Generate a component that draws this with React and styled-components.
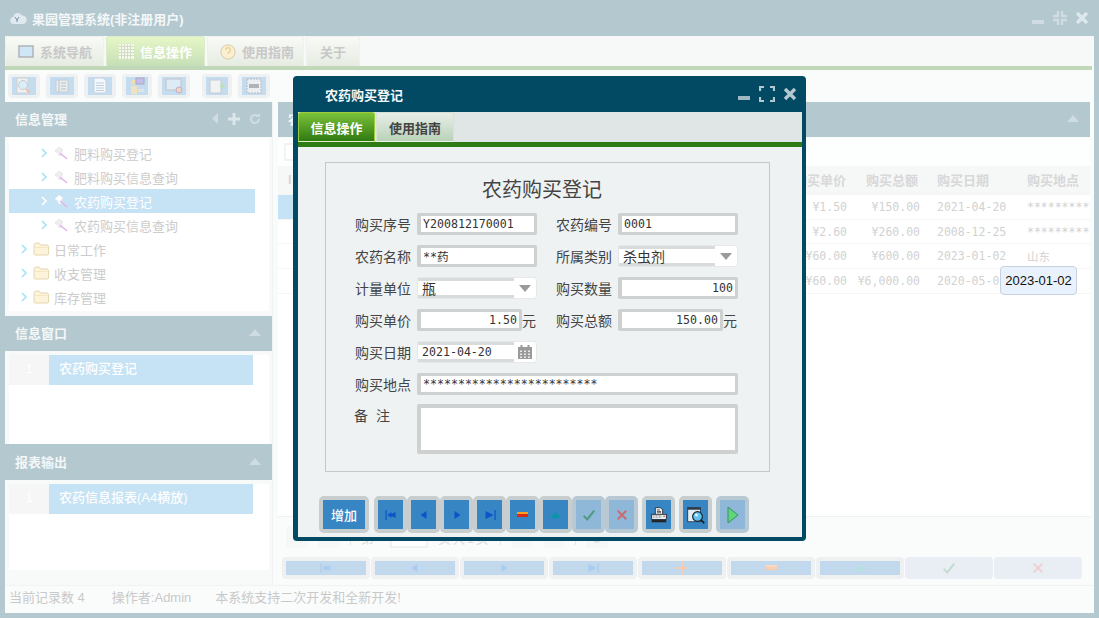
import styled, { createGlobalStyle } from 'styled-components';

const CJK = '"Liberation Sans", "Noto Sans CJK SC", sans-serif';
const MONO = '"DejaVu Sans Mono", "Noto Sans CJK SC", monospace';

const GlobalStyle = createGlobalStyle`
  html, body {
    margin: 0;
    padding: 0;
    background: #b4c8cf;
    overflow: hidden;
  }
  * { box-sizing: border-box; }
`;

/* ---------- icons ---------- */

const MinIcon = ({ color }) => (
  <svg width="14" height="14" viewBox="0 0 14 14"><rect x="1" y="9" width="12" height="4" fill={color} /></svg>
);

const RestoreIcon = ({ color }) => (
  <svg width="16" height="16" viewBox="0 0 16 16" fill="none" stroke={color} strokeWidth="2.4">
    <path d="M6 1v5H1M10 1v5h5M6 15v-5H1M10 15v-5h5" />
  </svg>
);

const MaxIcon = ({ color }) => (
  <svg width="16" height="16" viewBox="0 0 16 16" fill="none" stroke={color} strokeWidth="2.2">
    <path d="M1 5V1h4M11 1h4v4M1 11v4h4M15 11v4h-4" />
  </svg>
);

const CloseIcon = ({ color }) => (
  <svg width="14" height="14" viewBox="0 0 14 14" fill="none" stroke={color} strokeWidth="3.4">
    <path d="M2 2l10 10M12 2L2 12" />
  </svg>
);

const Caret = ({ color = '#cfdde2', down }) => (
  <svg width="12" height="7" viewBox="0 0 12 7">
    <path d={down ? 'M6 7l6-7H0z' : 'M6 0l6 7H0z'} fill={color} />
  </svg>
);

const Chevron = ({ color = '#a8e2f8' }) => (
  <svg width="8" height="10" viewBox="0 0 8 10" fill="none" stroke={color} strokeWidth="1.6">
    <path d="M2 1l4 4-4 4" />
  </svg>
);

const Folder = () => (
  <svg width="16" height="14" viewBox="0 0 16 14">
    <path d="M1 3.5C1 2 2 1 3 1h3l1.5 2H14c.8 0 1.5.6 1.5 1.5V12c0 .8-.6 1-1.5 1H2.5C1.5 13 1 12.5 1 12z" fill="#fdf3d8" stroke="#e6d6ae" />
    <rect x="2" y="5" width="12.5" height="1" fill="#f4e6c2" />
  </svg>
);

const Wand = ({ active }) => (
  <svg width="14" height="14" viewBox="0 0 14 14">
    <path d="M1 5l4-4 4 3-2 2 1 3-3 1-1-3z" fill={active ? '#fff' : '#eeeeee'} stroke={active ? '#eaf2f8' : '#dcdcdc'} strokeDasharray={active ? '' : '1 1'} />
    <path d="M6 7l7 6" stroke="#e3b4ee" strokeWidth="1.6" />
  </svg>
);

const PagerGlyph = ({ kind, color }) => {
  const shapes = {
    first: <><rect x="1.5" y="2" width="1.2" height="10" fill={color} /><path d="M3.5 7l4-3v2l4-2v6l-4-2v2z" fill={color} /></>,
    prev: <path d="M3.5 7l6-4v8z" fill={color} />,
    next: <path d="M10.5 7l-6-4v8z" fill={color} />,
    last: <><rect x="11.5" y="2" width="1.2" height="10" fill={color} /><path d="M10.5 7l-8-4v8z" fill={color} /></>,
  };
  return <svg width="14" height="14" viewBox="0 0 14 14">{shapes[kind]}</svg>;
};

const MinusGlyph = ({ pale }) => (
  <svg width="11" height="6" viewBox="0 0 11 6">
    <rect width="11" height="2" fill={pale ? '#f9d8c0' : '#f5a01e'} />
    <rect y="2" width="11" height="3" fill={pale ? '#f8cdb4' : '#d82a10'} />
  </svg>
);

const PlusGlyph = () => (
  <svg width="12" height="14" viewBox="0 0 12 14">
    <path d="M5 0h2v6h5v2H7v6H5V8H0V6h5z" fill="#f8cdb4" />
  </svg>
);

const UpGlyph = ({ pale }) => (
  <svg width="11" height="6" viewBox="0 0 11 6"><path d="M5.5 0L11 6H0z" fill={pale ? '#b6e2de' : '#0b95a8'} /></svg>
);

const CheckGlyph = ({ color }) => (
  <svg width="14" height="14" viewBox="0 0 16 14" fill="none" stroke={color} strokeWidth="2.4"><path d="M2 8l4 4 8-10" /></svg>
);

const CrossGlyph = ({ color }) => (
  <svg width="12" height="12" viewBox="0 0 14 14" fill="none" stroke={color} strokeWidth="2.2"><path d="M2 2l10 10M12 2L2 12" /></svg>
);

const PrinterGlyph = () => (
  <svg width="16" height="16" viewBox="0 0 22 22">
    <path d="M6 1h7l3 3v7H6z" fill="#fff" stroke="#111" />
    <path d="M8 4h4M8 6h6M8 8h6" stroke="#111" />
    <rect x="1" y="10" width="20" height="7" fill="#e8edf0" stroke="#111" />
    <path d="M3 12h12M3 14h12" stroke="#555" strokeDasharray="1 1" />
    <rect x="17" y="12" width="2" height="1.5" fill="#e02020" />
    <rect x="1" y="18" width="20" height="3" fill="#222" />
  </svg>
);

const PreviewGlyph = () => (
  <svg width="18" height="18" viewBox="0 0 24 24">
    <rect x="1" y="2" width="17" height="19" fill="#e6edf2" stroke="#1a2530" />
    <rect x="1" y="2" width="17" height="3" fill="#2d3d4d" />
    <circle cx="14" cy="14" r="6.5" fill="#62c0f0" stroke="#15222e" strokeWidth="1.5" />
    <circle cx="12.5" cy="12" r="2" fill="#e6f6ff" />
    <path d="M19 19l4 4" stroke="#111" strokeWidth="2.2" />
  </svg>
);

const PlayGlyph = () => (
  <svg width="14" height="18" viewBox="0 0 14 18"><path d="M2 1l10 8-10 8z" fill="#5fd478" stroke="#3c8d6a" /></svg>
);

const CalendarGlyph = () => (
  <svg width="16" height="16" viewBox="0 0 16 16">
    <path d="M1 3h14v12H1z" fill="#9a9a9a" />
    <rect x="3.5" y="1" width="2" height="3" fill="#9a9a9a" />
    <rect x="10.5" y="1" width="2" height="3" fill="#9a9a9a" />
    {[3, 7, 11].map((x) => [7, 10, 13].map((y) => (
      <rect key={`${x}-${y}`} x={x} y={y - 0.5} width="2" height="1.5" fill="#e8e8e8" />
    )))}
  </svg>
);

const RefreshGlyph = () => (
  <svg width="14" height="14" viewBox="0 0 12 12" fill="none" stroke="#e2e4e4" strokeWidth="2">
    <path d="M10 6a4 4 0 1 1-1.5-3.1" />
    <path d="M11 0v4H7z" fill="#e2e4e4" stroke="none" />
  </svg>
);

const CloudLogo = () => (
  <svg width="17" height="14" viewBox="0 0 17 14">
    <path d="M4 13a3.5 3.5 0 0 1-.5-7A4.5 4.5 0 0 1 12 4.5 4 4 0 0 1 13 13z" fill="#dfeaf0" />
    <path d="M5 6l2 3 2-3M7 9v2" stroke="#6f8fa0" fill="none" />
  </svg>
);

const MonitorIcon = () => (
  <svg width="16" height="14" viewBox="0 0 16 14">
    <rect x="1" y="1" width="14" height="11" fill="#cfe6f6" stroke="#b0b4b8" strokeWidth="1.5" />
  </svg>
);

const GridIcon = () => (
  <svg width="15" height="15" viewBox="0 0 15 15">
    <rect width="15" height="15" fill="#f4f8ea" />
    <path d="M0 2.5h15M0 5.5h15M0 8.5h15M0 11.5h15M2.5 0v15M5.5 0v15M8.5 0v15M11.5 0v15" stroke="#d3dcc4" />
  </svg>
);

const HelpIcon = () => (
  <svg width="16" height="16" viewBox="0 0 17 17">
    <circle cx="8.5" cy="8.5" r="7.5" fill="#fbefd2" stroke="#d8c8a0" />
    <path d="M6 6.5a2.5 2.5 0 1 1 3.5 2.3c-.7.3-1 .7-1 1.7" stroke="#e8d49a" fill="none" strokeWidth="1.5" />
  </svg>
);

const toolIcons = [
  <><rect x="2" y="1" width="11" height="15" fill="#f0f2f2" stroke="#d0d0d0" /><circle cx="8" cy="8" r="4.5" fill="#d9eef8" stroke="#c8ccd0" /><path d="M11 12l4 4" stroke="#ecc0b0" strokeWidth="2" /></>,
  <><rect x="3" y="3" width="12" height="12" fill="#e8edf0" stroke="#c8ccd0" /><path d="M6 3v12M8 6h5M8 9h5M8 12h5" stroke="#bbbfc2" /></>,
  <><path d="M3 1h9l3 3v12H3z" fill="#f4f8fb" stroke="#c8d0d8" /><path d="M5 6h8M5 8.5h8M5 11h8M5 13.5h8" stroke="#bcd0e0" /></>,
  <><circle cx="6" cy="5" r="2.5" fill="#f4dcae" /><path d="M3 9h6v8H3z" fill="#efe2c0" /><rect x="8" y="1" width="8" height="6" fill="#c4bfe8" stroke="#a8a8c0" /><rect x="10" y="12" width="6" height="3" fill="#e0e4e4" /></>,
  <><rect x="1" y="2" width="15" height="11" fill="#dcebf5" stroke="#c0c4c8" /><circle cx="14" cy="13" r="3" fill="#e8d8c8" stroke="#d0a8c0" /></>,
  <><rect x="2" y="3" width="11" height="13" fill="#f0f2f3" stroke="#c8ccd0" /><path d="M12 9h5M14.5 6.5v5" stroke="#b8e0b8" strokeWidth="1.5" /></>,
  <><rect x="2" y="2" width="14" height="14" fill="#eceff1" stroke="#b8bcc0" strokeDasharray="2 1" /><rect x="4" y="7" width="10" height="4" fill="#b0b4b8" /></>,
];

/* ---------- main window ---------- */

const Shell = styled.div`
  width: 1099px;
  height: 618px;
  padding: 0 5px 5px;
  display: flex;
  flex-direction: column;
  background: #b4c8cf;
  font-family: ${CJK};
  font-size: 13px;
  color: #cccccc;
  position: relative;
  overflow: hidden;
`;

const TitleBar = styled.div`
  height: 36px;
  flex: none;
  display: flex;
  align-items: center;
  gap: 5px;
  padding: 0 5px;
  color: #f3f7f8;
  font-weight: 700;
  font-size: 13px;
`;

const TitleText = styled.span`
  flex: 1;
`;

const WinButtons = styled.div`
  display: flex;
  align-items: center;
  gap: ${(p) => p.$gap || 7}px;
`;

const Body = styled.div`
  flex: 1;
  min-height: 0;
  display: flex;
  flex-direction: column;
  background: #fafcfc;
`;

const TabBar = styled.div`
  height: 30px;
  flex: none;
  display: flex;
  gap: 2px;
  background: #f7f8f8;
`;

const TopTab = styled.div`
  width: ${(p) => p.$w}px;
  display: flex;
  align-items: center;
  justify-content: ${(p) => (p.$plain ? 'center' : 'flex-start')};
  gap: 6px;
  padding-left: ${(p) => (p.$plain ? 0 : 12)}px;
  font-weight: 700;
  color: ${(p) => (p.$active ? '#ffffff' : '#c8c8c8')};
  border: 1px solid ${(p) => (p.$active ? '#dcebc8' : '#eef2ee')};
  border-bottom: 0;
  border-radius: 3px 3px 0 0;
  background: ${(p) =>
    p.$active
      ? 'linear-gradient(#e6f6c6, #c6dfb8)'
      : 'linear-gradient(#f8faf6, #e6ece2)'};
`;

const GreenLine = styled.div`
  height: 4px;
  flex: none;
  margin-right: 2px;
  background: #c0d8b8;
`;

const ToolBar = styled.div`
  height: 32px;
  flex: none;
  display: flex;
  align-items: center;
  padding-left: 3px;
`;

const ToolButton = styled.div`
  width: ${(p) => p.$w}px;
  height: 24px;
  margin-right: ${(p) => p.$mr}px;
  padding: 3px 4px;
  border-radius: 4px;
  background: #eef0f1;
`;

const ToolInner = styled.div`
  height: 100%;
  display: flex;
  align-items: center;
  justify-content: center;
  background: #c4dcf0;
`;

const Main = styled.div`
  flex: 1;
  min-height: 0;
  display: flex;
  gap: 5px;
  padding-right: 4px;
`;

const Side = styled.div`
  width: 268px;
  flex: none;
  display: flex;
  flex-direction: column;
  background: #f8fafa;
  border-right: 1px solid #f0f3f3;
`;

const PanelHead = styled.div`
  height: ${(p) => p.$h || 35}px;
  flex: none;
  display: flex;
  align-items: center;
  justify-content: space-between;
  padding: 0 11px 2px 10px;
  background: #b4c8cf;
  color: #f3f7f8;
  font-weight: 700;
`;

const HeadTools = styled.div`
  display: flex;
  align-items: center;
  gap: 9px;
`;

const TreeBox = styled.div`
  height: 173px;
  flex: none;
  margin: 1px 3px 5px 4px;
  padding-top: 3px;
  background: #ffffff;
`;

const TreeRow = styled.div`
  height: 24px;
  width: 246px;
  display: flex;
  align-items: center;
  gap: ${(p) => (p.$branch ? 5 : 6)}px;
  padding-left: ${(p) => (p.$branch ? 11 : 31)}px;
  background: ${(p) => (p.$active ? '#c6e2f5' : 'transparent')};
  color: ${(p) => (p.$active ? '#ffffff' : '#cccccc')};
`;

const ListBox = styled.div`
  height: ${(p) => p.$h}px;
  flex: none;
  margin: 4px 3px 0 4px;
  background: #ffffff;
`;

const ListRow = styled.div`
  height: 30px;
  width: 244px;
  display: flex;
`;

const ListNum = styled.div`
  width: 40px;
  display: flex;
  align-items: center;
  justify-content: center;
  padding-bottom: 4px;
  background: #f6f6f6;
  color: #ffffff;
`;

const ListText = styled.div`
  flex: 1;
  display: flex;
  align-items: center;
  padding: 0 0 5px 10px;
  background: #c6e2f5;
  color: #ffffff;
  font-weight: 500;
`;

const Content = styled.div`
  flex: 1;
  min-width: 0;
  display: flex;
  flex-direction: column;
  background: #fafcfc;
`;

const SearchRow = styled.div`
  height: 28px;
  flex: none;
  margin-top: 1px;
  padding: 5px 6px;
  background: #fdfefe;
`;

const SearchBox = styled.div`
  width: 40px;
  height: 18px;
  background: #ffffff;
  border: 2px solid #f2f4f4;
`;

const Table = styled.div`
  flex: 1;
  min-height: 0;
  overflow: hidden;
  background: #ffffff;
  border-bottom: 1px solid #eef1f1;
`;

const Row = styled.div`
  height: ${(p) => (p.$head ? 29 : 24.7)}px;
  display: grid;
  grid-template-columns: 1fr 72px 71px 90px 73px;
  align-items: center;
  border-bottom: 1px solid #f4f6f6;
  background: ${(p) => (p.$head ? '#f6f7f7' : '#ffffff')};
`;

const HeadCell = styled.div`
  padding: 0 0 2px 10px;
  font-weight: 700;
  color: #d8d8d8;
  white-space: nowrap;
`;

const Cell = styled.div`
  font-family: ${MONO};
  font-size: 11.5px;
  color: #d2d2d2;
  white-space: nowrap;
  overflow: ${(p) => (p.$clip ? 'hidden' : 'visible')};
  text-align: ${(p) => (p.$right ? 'right' : 'left')};
  padding: ${(p) => (p.$right ? `0 ${p.$right}px 0 0` : '0 0 0 10px')};
`;

const RowMark = styled.div`
  align-self: stretch;
  width: 15px;
  background: ${(p) => (p.$selected ? '#c6e2f5' : 'transparent')};
`;

const Pager = styled.div`
  height: 40px;
  flex: none;
  display: flex;
  align-items: center;
  padding-left: 8px;
  gap: 10px;
  color: #dddddd;
  font-size: 13px;
`;

const PagerBox = styled.div`
  width: 22px;
  height: 22px;
  display: flex;
  align-items: center;
  justify-content: center;
  border-radius: 3px;
  background: #f6f7f7;
`;

const PagerSep = styled.div`
  width: 1px;
  height: 16px;
  background: #e6e8e8;
`;

const PagerInput = styled.div`
  width: 38px;
  height: 22px;
  margin-left: 6px;
  background: #ffffff;
  border: 2px solid #f0f2f2;
`;

const PagerText = styled.span`
  letter-spacing: 1.5px;
  white-space: nowrap;
`;

const ActionRow = styled.div`
  height: 28px;
  flex: none;
  display: flex;
  gap: 1px;
  padding: 0 8px 6px 4px;
`;

const ActionBtn = styled.div`
  flex: 1;
  padding: 4px;
  border-radius: 4px;
  background: ${(p) => (p.$off ? '#e8eef4' : '#eef0f1')};
`;

const ActionInner = styled.div`
  height: 100%;
  display: flex;
  align-items: center;
  justify-content: center;
  background: ${(p) => (p.$off ? 'transparent' : '#c2d8ec')};
`;

const StatusBar = styled.div`
  height: 28px;
  flex: none;
  display: flex;
  align-items: center;
  gap: 24px;
  padding: 0 0 6px 4px;
  border-top: 1px solid #f0f3f3;
  color: #c9c9c9;
`;

const StatusItem = styled.span`
  margin-right: ${(p) => p.$mr || 0}px;
`;

const Tip = styled.div`
  position: absolute;
  left: 1000px;
  top: 266px;
  width: 77px;
  height: 29px;
  display: flex;
  align-items: center;
  justify-content: center;
  background: #e9f1fc;
  border: 1px solid #c6d2e2;
  border-radius: 4px;
  color: #111111;
  font-family: "Liberation Sans", sans-serif;
  font-size: 13px;
`;

/* ---------- dialog ---------- */

const Dialog = styled.div`
  position: absolute;
  left: 293px;
  top: 76px;
  width: 513px;
  height: 465px;
  display: flex;
  flex-direction: column;
  background: #024a63;
  border-radius: 4px;
  padding: 0 4px 4px 5px;
`;

const DialogHead = styled.div`
  height: 36px;
  flex: none;
  display: flex;
  align-items: center;
  justify-content: space-between;
  padding: 0 5px 0 27px;
  color: #f2f7f9;
  font-weight: 700;
  font-size: 13px;
`;

const DialogBody = styled.div`
  flex: 1;
  min-height: 0;
  display: flex;
  flex-direction: column;
  background: #eef2f3;
`;

const DialogTabs = styled.div`
  height: 30px;
  flex: none;
  display: flex;
  gap: 1px;
  background: #e0e5e5;
`;

const DialogTab = styled.div`
  width: ${(p) => (p.$active ? 77 : 78)}px;
  display: flex;
  align-items: center;
  justify-content: center;
  font-weight: 700;
  font-size: 13px;
  border-radius: 3px 3px 0 0;
  color: ${(p) => (p.$active ? '#ffffff' : '#444444')};
  border: 1px solid ${(p) => (p.$active ? '#9ccc3c' : '#d6e2d6')};
  border-bottom: 1px solid ${(p) => (p.$active ? '#dcefc8' : '#eef4ee')};
  background: ${(p) =>
    p.$active
      ? 'linear-gradient(#7cc23a, #2f7a12)'
      : 'linear-gradient(#e8eee8, #b9d2b9)'};
`;

const DialogLine = styled.div`
  height: 5px;
  flex: none;
  background: #2e7a14;
`;

const Frame = styled.div`
  width: 445px;
  height: 310px;
  flex: none;
  margin: 15px 0 0 27px;
  border: 1px solid #c4c8c8;
  display: flex;
  flex-direction: column;
`;

const FormTitle = styled.div`
  height: 50px;
  flex: none;
  display: flex;
  align-items: center;
  justify-content: center;
  padding: 0 11px 0 0;
  font-size: 20px;
  color: #444444;
`;

const FormGrid = styled.div`
  display: grid;
  grid-template-columns: 62px 120px 19px 62px 120px;
  grid-auto-rows: 22px;
  row-gap: 10px;
  padding-left: 29px;
`;

const Label = styled.div`
  grid-column: ${(p) => p.$col};
  display: flex;
  align-items: center;
  font-size: 14px;
  color: #444444;
  white-space: nowrap;
`;

const Input = styled.input`
  grid-column: ${(p) => p.$col || 'auto'};
  width: ${(p) => p.$w || '100%'};
  height: 22px;
  min-width: 0;
  margin: 0;
  padding: 0 2px;
  border: solid #cfd1d1;
  border-width: 3px 3px 3px 4px;
  border-radius: 2px;
  outline: 0;
  background: #ffffff;
  font-family: ${MONO};
  font-size: 11.6px;
  color: #333333;
  text-align: ${(p) => (p.$right ? 'right' : 'left')};
`;

const UnitField = styled.div`
  grid-column: ${(p) => p.$col};
  display: flex;
  align-items: center;
  font-size: 14px;
  color: #444444;
`;

const ComboBox = styled.div`
  grid-column: ${(p) => p.$col};
  height: 22px;
  display: flex;
  background: #ffffff;
  border: 1px solid #e6e8e8;
  border-radius: 3px;
`;

const ComboValue = styled.div`
  flex: 1;
  min-width: 0;
  display: flex;
  align-items: center;
  padding-left: 4px;
  background: #ffffff;
  border-top: 3px solid #dadcdc;
  border-bottom: 3px solid #dadcdc;
  font-family: ${MONO};
  font-size: ${(p) => (p.$mono ? 11.6 : 14)}px;
  color: #333333;
`;

const ComboTail = styled.div`
  width: 22px;
  flex: none;
  display: flex;
  align-items: center;
  justify-content: center;
`;

const RemarkLabel = styled(Label)`
  align-items: flex-start;
  grid-row: span 2;
  word-spacing: 4px;
  margin-left: -1px;
`;

const Remark = styled.textarea`
  grid-column: 2 / 6;
  grid-row: span 2;
  height: 50px;
  margin: -1px 0 0;
  padding: 0;
  resize: none;
  outline: 0;
  background: #ffffff;
  border: solid #cfd1d1;
  border-width: 4px 3px 4px 4px;
  border-radius: 2px;
`;

const DialogTools = styled.div`
  display: flex;
  margin: 24px 0 0 21px;
`;

const DlgButton = styled.div`
  width: ${(p) => p.$w || 33}px;
  height: 37px;
  margin-right: ${(p) => p.$mr || 0}px;
  padding: 4px;
  border-radius: 5px;
  background: ${(p) => (p.$off ? '#b8c9d3' : '#c8cdce')};
`;

const DlgInner = styled.div`
  height: 100%;
  display: flex;
  align-items: center;
  justify-content: center;
  background: ${(p) => (p.$off ? '#8fb8d8' : '#3785c2')};
  color: #ffffff;
  font-size: 13px;
  font-weight: 500;
`;

/* ---------- data ---------- */

const treeRows = [
  { text: '肥料购买登记' },
  { text: '肥料购买信息查询' },
  { text: '农药购买登记', active: true },
  { text: '农药购买信息查询' },
  { text: '日常工作', branch: true },
  { text: '收支管理', branch: true },
  { text: '库存管理', branch: true },
];

const tableRows = [
  { price: '¥1.50', total: '¥150.00', date: '2021-04-20', place: '**************', selected: true },
  { price: '¥2.60', total: '¥260.00', date: '2008-12-25', place: '**************' },
  { price: '¥60.00', total: '¥600.00', date: '2023-01-02', place: '山东' },
  { price: '¥60.00', total: '¥6,000.00', date: '2020-05-02', place: '' },
];

const toolSizes = [
  [32, 6], [32, 6], [32, 6], [30, 6], [32, 12], [30, 6], [32, 0],
];

const blue = '#0a55c8';
const paleBlue = '#a9cdf0';

export default function App() {
  return (
    <Shell>
      <GlobalStyle />
      <TitleBar>
        <CloudLogo />
        <TitleText>果园管理系统(非注册用户)</TitleText>
        <WinButtons>
          <MinIcon color="#cfdde2" />
          <RestoreIcon color="#cfdde2" />
          <CloseIcon color="#dde8ec" />
        </WinButtons>
      </TitleBar>

      <Body>
        <TabBar>
          <TopTab $w={99}><MonitorIcon />系统导航</TopTab>
          <TopTab $w={99} $active><GridIcon />信息操作</TopTab>
          <TopTab $w={97}><HelpIcon />使用指南</TopTab>
          <TopTab $w={54} $plain>关于</TopTab>
        </TabBar>
        <GreenLine />

        <ToolBar>
          {toolIcons.map((icon, i) => (
            <ToolButton key={i} $w={toolSizes[i][0]} $mr={toolSizes[i][1]}>
              <ToolInner>
                <svg width="18" height="18" viewBox="0 0 18 18">{icon}</svg>
              </ToolInner>
            </ToolButton>
          ))}
        </ToolBar>

        <Main>
          <Side>
            <PanelHead>
              信息管理
              <HeadTools>
                <svg width="7" height="11" viewBox="0 0 7 11"><path d="M6 0v11L0 5.5z" fill="#cfdde2" /></svg>
                <svg width="12" height="12" viewBox="0 0 12 12"><path d="M4.5 0h3v4.5H12v3H7.5V12h-3V7.5H0v-3h4.5z" fill="#dbe6ea" /></svg>
                <svg width="12" height="12" viewBox="0 0 12 12" fill="none" stroke="#cfdde2" strokeWidth="2.2"><path d="M10 6a4 4 0 1 1-1.5-3.1" /><path d="M11 0v4H7z" fill="#cfdde2" stroke="none" /></svg>
              </HeadTools>
            </PanelHead>
            <TreeBox>
              {treeRows.map((row) => (
                <TreeRow key={row.text} $active={row.active} $branch={row.branch}>
                  <Chevron color={row.active ? '#ffffff' : '#a8e2f8'} />
                  {row.branch ? <Folder /> : <Wand active={row.active} />}
                  <span>{row.text}</span>
                </TreeRow>
              ))}
            </TreeBox>

            <PanelHead>
              信息窗口
              <Caret />
            </PanelHead>
            <ListBox $h={89}>
              <ListRow>
                <ListNum>1</ListNum>
                <ListText>农药购买登记</ListText>
              </ListRow>
            </ListBox>

            <PanelHead $h={36}>
              报表输出
              <Caret />
            </PanelHead>
            <ListBox $h={86}>
              <ListRow>
                <ListNum>1</ListNum>
                <ListText>农药信息报表(A4横放)</ListText>
              </ListRow>
            </ListBox>
          </Side>

          <Content>
            <PanelHead>
              农药购买信息
              <Caret />
            </PanelHead>
            <SearchRow><SearchBox /></SearchRow>
            <Table>
              <Row $head>
                <HeadCell>I</HeadCell>
                <HeadCell>购买单价</HeadCell>
                <HeadCell>购买总额</HeadCell>
                <HeadCell>购买日期</HeadCell>
                <HeadCell>购买地点</HeadCell>
              </Row>
              {tableRows.map((row) => (
                <Row key={row.date}>
                  <RowMark $selected={row.selected} />
                  <Cell $right={9}>{row.price}</Cell>
                  <Cell $right={7}>{row.total}</Cell>
                  <Cell>{row.date}</Cell>
                  <Cell $clip>{row.place}</Cell>
                </Row>
              ))}
            </Table>
            <Pager>
              <PagerBox />
              <PagerBox />
              <PagerSep />
              <span>第</span>
              <PagerInput />
              <PagerText>页共1页</PagerText>
              <PagerSep />
              <PagerBox />
              <PagerBox />
              <PagerSep />
              <PagerBox><RefreshGlyph /></PagerBox>
            </Pager>
            <ActionRow>
              <ActionBtn><ActionInner><PagerGlyph kind="first" color={paleBlue} /></ActionInner></ActionBtn>
              <ActionBtn><ActionInner><PagerGlyph kind="prev" color={paleBlue} /></ActionInner></ActionBtn>
              <ActionBtn><ActionInner><PagerGlyph kind="next" color={paleBlue} /></ActionInner></ActionBtn>
              <ActionBtn><ActionInner><PagerGlyph kind="last" color={paleBlue} /></ActionInner></ActionBtn>
              <ActionBtn><ActionInner><PlusGlyph /></ActionInner></ActionBtn>
              <ActionBtn><ActionInner><MinusGlyph pale /></ActionInner></ActionBtn>
              <ActionBtn><ActionInner><UpGlyph pale /></ActionInner></ActionBtn>
              <ActionBtn $off><ActionInner $off><CheckGlyph color="#c4dcd0" /></ActionInner></ActionBtn>
              <ActionBtn $off><ActionInner $off><CrossGlyph color="#f0d0d0" /></ActionInner></ActionBtn>
            </ActionRow>
          </Content>
        </Main>

        <StatusBar>
          <StatusItem $mr={3}>当前记录数 4</StatusItem>
          <StatusItem>操作者:Admin</StatusItem>
          <StatusItem>本系统支持二次开发和全新开发!</StatusItem>
        </StatusBar>
      </Body>

      <Tip>2023-01-02</Tip>

      <Dialog>
        <DialogHead>
          农药购买登记
          <WinButtons $gap={8}>
            <MinIcon color="#9fb8c2" />
            <MaxIcon color="#b4c8d0" />
            <CloseIcon color="#b4c8d0" />
          </WinButtons>
        </DialogHead>
        <DialogBody>
          <DialogTabs>
            <DialogTab $active>信息操作</DialogTab>
            <DialogTab>使用指南</DialogTab>
          </DialogTabs>
          <DialogLine />
          <Frame>
            <FormTitle>农药购买登记</FormTitle>
            <FormGrid>
              <Label $col={1}>购买序号</Label>
              <Input $col={2} readOnly value="Y200812170001" />
              <Label $col={4}>农药编号</Label>
              <Input $col={5} readOnly value="0001" />

              <Label $col={1}>农药名称</Label>
              <Input $col={2} readOnly value="**药" />
              <Label $col={4}>所属类别</Label>
              <ComboBox $col={5}>
                <ComboValue>杀虫剂</ComboValue>
                <ComboTail><Caret color="#9a9a9a" down /></ComboTail>
              </ComboBox>

              <Label $col={1}>计量单位</Label>
              <ComboBox $col={2}>
                <ComboValue>瓶</ComboValue>
                <ComboTail><Caret color="#9a9a9a" down /></ComboTail>
              </ComboBox>
              <Label $col={4}>购买数量</Label>
              <Input $col={5} $right readOnly value="100" />

              <Label $col={1}>购买单价</Label>
              <UnitField $col={2}>
                <Input $w="105px" $right readOnly value="1.50" />元
              </UnitField>
              <Label $col={4}>购买总额</Label>
              <UnitField $col={5}>
                <Input $w="105px" $right readOnly value="150.00" />元
              </UnitField>

              <Label $col={1}>购买日期</Label>
              <ComboBox $col={2}>
                <ComboValue $mono>2021-04-20</ComboValue>
                <ComboTail><CalendarGlyph /></ComboTail>
              </ComboBox>
              <span />
              <span />
              <span />

              <Label $col={1}>购买地点</Label>
              <Input $col="2 / 6" readOnly value="*************************" />

              <RemarkLabel $col={1}>备 注</RemarkLabel>
              <Remark readOnly />
            </FormGrid>
          </Frame>
          <DialogTools>
            <DlgButton $w={50} $mr={5}><DlgInner>增加</DlgInner></DlgButton>
            <DlgButton><DlgInner><PagerGlyph kind="first" color={blue} /></DlgInner></DlgButton>
            <DlgButton><DlgInner><PagerGlyph kind="prev" color={blue} /></DlgInner></DlgButton>
            <DlgButton><DlgInner><PagerGlyph kind="next" color={blue} /></DlgInner></DlgButton>
            <DlgButton><DlgInner><PagerGlyph kind="last" color={blue} /></DlgInner></DlgButton>
            <DlgButton><DlgInner><MinusGlyph /></DlgInner></DlgButton>
            <DlgButton><DlgInner><UpGlyph /></DlgInner></DlgButton>
            <DlgButton $off><DlgInner $off><CheckGlyph color="#4f9a84" /></DlgInner></DlgButton>
            <DlgButton $off $mr={4}><DlgInner $off><CrossGlyph color="#c86a70" /></DlgInner></DlgButton>
            <DlgButton $mr={4}><DlgInner><PrinterGlyph /></DlgInner></DlgButton>
            <DlgButton $mr={4}><DlgInner><PreviewGlyph /></DlgInner></DlgButton>
            <DlgButton $off><DlgInner $off><PlayGlyph /></DlgInner></DlgButton>
          </DialogTools>
        </DialogBody>
      </Dialog>
    </Shell>
  );
}
